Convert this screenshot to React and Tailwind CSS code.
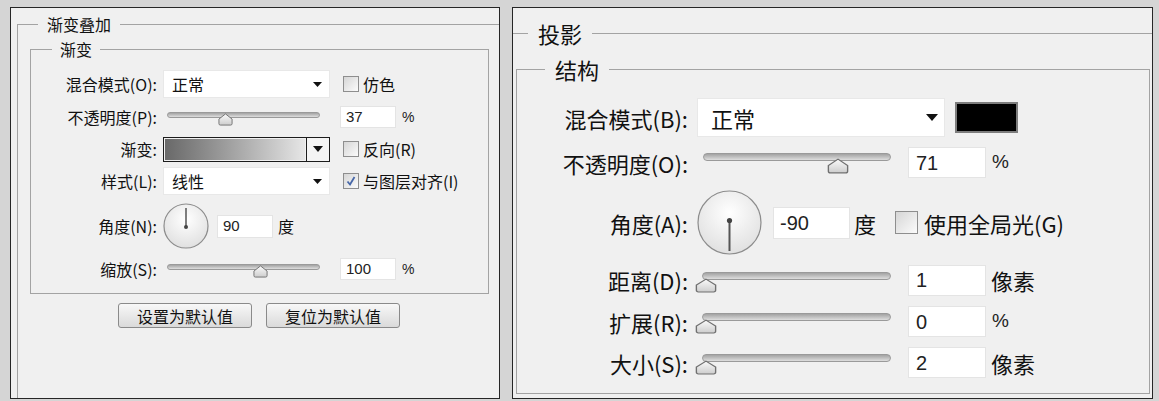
import React from "react";

function Tri({ className }) {
  return (
    <svg viewBox="0 0 10 6" className={className} preserveAspectRatio="none">
      <path d="M0 0H10L5 6Z" fill="#111" />
    </svg>
  );
}

function Thumb({ className, id }) {
  return (
    <svg viewBox="0 0 16 14" className={className} preserveAspectRatio="none">
      <defs>
        <linearGradient id={id} x1="0" y1="0" x2="0" y2="1">
          <stop offset="0" stopColor="#fbfbfb" />
          <stop offset="1" stopColor="#cdcdcd" />
        </linearGradient>
      </defs>
      <path
        d="M8 1 L15 6.5 V11.5 Q15 13 13.5 13 H2.5 Q1 13 1 11.5 V6.5 Z"
        fill={`url(#${id})`}
        stroke="#707070"
        strokeWidth="1"
      />
    </svg>
  );
}

function Slider({ box, track, thumb, id }) {
  return (
    <div className={`relative shrink-0 ${box}`}>
      <div
        className={`rounded-full border border-[#9a9a9a] bg-linear-to-b from-[#a3a3a3] to-[#dedede] ${track}`}
      />
      <Thumb className={`absolute ${thumb}`} id={id} />
    </div>
  );
}

function Box({ className, checked }) {
  return (
    <div
      className={`shrink-0 border border-[#8e8e8e] bg-linear-to-br from-[#d6d6d6] to-[#fbfbfb] flex items-center justify-center ${className}`}
    >
      {checked && (
        <svg viewBox="0 0 12 12" className="w-[12px] h-[12px]">
          <path d="M2.5 6.5 L5 9.5 L9.5 2" fill="none" stroke="#4767a8" strokeWidth="1.8" />
        </svg>
      )}
    </div>
  );
}

function Dial({ size, down }) {
  const c = size / 2;
  const r = c - 1;
  const gid = down ? "dialR" : "dialL";
  return (
    <svg width={size} height={size} viewBox={`0 0 ${size} ${size}`} className="shrink-0">
      <defs>
        <radialGradient id={gid} cx="0.5" cy="0.35" r="0.65">
          <stop offset="0" stopColor="#ffffff" />
          <stop offset="1" stopColor="#e0e0e0" />
        </radialGradient>
      </defs>
      <circle cx={c} cy={c} r={r} fill={`url(#${gid})`} stroke="#8c8c8c" strokeWidth="1.2" />
      {down ? (
        <>
          <line x1={c} y1={c - 2} x2={c} y2={size - 4} stroke="#555" strokeWidth="2" />
          <circle cx={c} cy={c - 2} r="2.6" fill="#444" />
        </>
      ) : (
        <>
          <line x1={c} y1={c + 1} x2={c} y2={5} stroke="#555" strokeWidth="1.5" />
          <circle cx={c} cy={c + 1} r="2" fill="#444" />
        </>
      )}
    </svg>
  );
}

const LBL_L = "w-[126px] mr-[6px] shrink-0 text-right text-[16px] leading-none text-[#111]";
const LBL_R = "w-[171px] mr-[9px] shrink-0 text-right text-[22px] leading-none text-[#111]";
const INP_L =
  "shrink-0 bg-white border border-[#e4e4e4] flex items-center font-['Liberation_Sans',sans-serif] text-[15px] text-[#222]";
const INP_R =
  "shrink-0 bg-white border border-[#e4e4e4] flex items-center font-['Liberation_Sans',sans-serif] text-[20px] text-[#222]";

function LeftPanel() {
  return (
    <div className="w-[490px] h-[392px] shrink-0 border border-[#262626] bg-[#f0f0f0] flex flex-col pl-[6px] pt-[6px]">
      <fieldset className="flex-1 min-w-0 border-t border-l border-[#a3a3a3]">
        <legend className="ml-[20px] px-[9px] text-[16px] leading-[20px] text-[#111]">渐变叠加</legend>
        <fieldset className="ml-[12px] mr-[10px] mt-[5px] min-w-0 border border-[#a3a3a3]">
          <legend className="ml-[21px] px-[8px] text-[16px] leading-[20px] text-[#111]">渐变</legend>
          <div className="flex flex-col pb-[12px]">
            {/* 混合模式 */}
            <div className="flex items-center mt-[11px] h-[28px]">
              <span className={LBL_L}>混合模式(O):</span>
              <div className="w-[167px] h-[28px] shrink-0 bg-white border border-[#e8e8e8] flex items-center pl-[8px] pr-[7px]">
                <span className="flex-1 text-[16px] leading-none text-[#111]">正常</span>
                <Tri className="w-[9px] h-[5px]" />
              </div>
              <Box className="ml-[13px] w-[16px] h-[16px]" />
              <span className="ml-[4px] text-[16px] leading-none text-[#111]">仿色</span>
            </div>
            {/* 不透明度 */}
            <div className="flex items-center mt-[7px] h-[24px]">
              <span className={LBL_L}>不透明度(P):</span>
              <Slider
                box="w-[177px] h-[24px]"
                track="ml-[4px] mt-[7px] w-[153px] h-[6px]"
                thumb="top-[8px] left-[55px] w-[15px] h-[13px]"
                id="t1"
              />
              <div className={`${INP_L} w-[56px] h-[22px] pl-[5px]`}>37</div>
              <span className="ml-[6px] font-['Liberation_Sans',sans-serif] text-[14px] text-[#222]">%</span>
            </div>
            {/* 渐变 */}
            <div className="flex items-center mt-[7px] h-[26px]">
              <span className={LBL_L}>渐变:</span>
              <div className="w-[167px] h-[25px] shrink-0 border border-[#1c1c1c] flex">
                <div className="flex-1 m-[1px] bg-linear-to-r from-[#696969] to-[#e6e6e6]" />
                <div className="w-[23px] border-l border-[#1c1c1c] bg-[#f4f4f4] flex items-center justify-center">
                  <Tri className="w-[10px] h-[6px]" />
                </div>
              </div>
              <Box className="ml-[13px] w-[16px] h-[16px]" />
              <span className="ml-[4px] text-[16px] leading-none text-[#111]">反向(R)</span>
            </div>
            {/* 样式 */}
            <div className="flex items-center mt-[5px] h-[28px]">
              <span className={LBL_L}>样式(L):</span>
              <div className="w-[167px] h-[28px] shrink-0 bg-white border border-[#e8e8e8] flex items-center pl-[8px] pr-[7px]">
                <span className="flex-1 text-[16px] leading-none text-[#111]">线性</span>
                <Tri className="w-[9px] h-[5px]" />
              </div>
              <Box className="ml-[13px] w-[16px] h-[16px]" checked />
              <span className="ml-[4px] text-[16px] leading-none text-[#111]">与图层对齐(I)</span>
            </div>
            {/* 角度 */}
            <div className="flex items-center mt-[8px] h-[46px]">
              <span className={LBL_L}>角度(N):</span>
              <Dial size={46} />
              <div className={`${INP_L} ml-[8px] w-[56px] h-[23px] pl-[5px]`}>90</div>
              <span className="ml-[5px] text-[16px] leading-none text-[#111]">度</span>
            </div>
            {/* 缩放 */}
            <div className="flex items-center mt-[8px] h-[24px]">
              <span className={LBL_L}>缩放(S):</span>
              <Slider
                box="w-[177px] h-[24px]"
                track="ml-[4px] mt-[7px] w-[153px] h-[6px]"
                thumb="top-[8px] left-[90px] w-[15px] h-[13px]"
                id="t2"
              />
              <div className={`${INP_L} w-[56px] h-[22px] pl-[5px]`}>100</div>
              <span className="ml-[6px] font-['Liberation_Sans',sans-serif] text-[14px] text-[#222]">%</span>
            </div>
          </div>
        </fieldset>
        <div className="flex gap-[14px] ml-[100px] mt-[9px]">
          <div className="w-[134px] h-[25px] rounded-[3px] border border-[#8a8a8a] bg-linear-to-b from-[#f8f8f8] to-[#dadada] flex items-center justify-center text-[16px] leading-none text-[#111]">
            设置为默认值
          </div>
          <div className="w-[134px] h-[25px] rounded-[3px] border border-[#8a8a8a] bg-linear-to-b from-[#f8f8f8] to-[#dadada] flex items-center justify-center text-[16px] leading-none text-[#111]">
            复位为默认值
          </div>
        </div>
      </fieldset>
    </div>
  );
}

function RightPanel() {
  return (
    <div className="w-[641px] h-[392px] shrink-0 border border-[#262626] bg-[#f0f0f0] flex flex-col pt-[11px]">
      <fieldset className="flex-1 min-w-0 border-t border-[#a3a3a3]">
        <legend className="ml-[15px] px-[10px] text-[22px] leading-[28px] text-[#111]">投影</legend>
        <fieldset className="ml-[3px] mr-[2px] mt-[8px] min-w-0 border border-[#a3a3a3]">
          <legend className="ml-[28px] px-[10px] text-[22px] leading-[28px] text-[#111]">结构</legend>
          <div className="flex flex-col pb-[15px]">
            {/* 混合模式 */}
            <div className="flex items-center mt-[15px] h-[39px]">
              <span className={LBL_R}>混合模式(B):</span>
              <div className="w-[248px] h-[39px] shrink-0 bg-white border border-[#e8e8e8] flex items-center pl-[13px] pr-[6px]">
                <span className="flex-1 text-[22px] leading-none text-[#111]">正常</span>
                <Tri className="w-[12px] h-[7px]" />
              </div>
              <div className="ml-[10px] w-[63px] h-[31px] bg-black border-2 border-[#7d7d7d]" />
            </div>
            {/* 不透明度 */}
            <div className="flex items-center mt-[10px] h-[31px]">
              <span className={LBL_R}>不透明度(O):</span>
              <Slider
                box="w-[211px] h-[31px]"
                track="ml-[6px] mt-[6px] w-[188px] h-[8px]"
                thumb="top-[11px] left-[130px] w-[22px] h-[16px]"
                id="t3"
              />
              <div className={`${INP_R} w-[78px] h-[31px] pl-[7px]`}>71</div>
              <span className="ml-[6px] font-['Liberation_Sans',sans-serif] text-[19px] text-[#222]">%</span>
            </div>
            {/* 角度 */}
            <div className="flex items-center mt-[12px] h-[65px]">
              <span className={LBL_R}>角度(A):</span>
              <Dial size={65} down />
              <div className={`${INP_R} ml-[11px] w-[77px] h-[32px] pl-[6px]`}>-90</div>
              <span className="ml-[4px] text-[22px] leading-none text-[#111]">度</span>
              <Box className="ml-[19px] w-[23px] h-[23px]" />
              <span className="ml-[6px] text-[22px] leading-none text-[#111]">使用全局光(G)</span>
            </div>
            {/* 距离 */}
            <div className="flex items-center mt-[10px] h-[30px]">
              <span className={LBL_R}>距离(D):</span>
              <Slider
                box="w-[211px] h-[30px]"
                track="ml-[5px] mt-[7px] w-[189px] h-[8px]"
                thumb="top-[13px] left-[-2px] w-[22px] h-[15px]"
                id="t4"
              />
              <div className={`${INP_R} w-[78px] h-[31px] pl-[7px]`}>1</div>
              <span className="ml-[5px] text-[22px] leading-none text-[#111]">像素</span>
            </div>
            {/* 扩展 */}
            <div className="flex items-center mt-[11px] h-[31px]">
              <span className={LBL_R}>扩展(R):</span>
              <Slider
                box="w-[211px] h-[31px]"
                track="ml-[5px] mt-[7px] w-[189px] h-[8px]"
                thumb="top-[13px] left-[-2px] w-[22px] h-[15px]"
                id="t5"
              />
              <div className={`${INP_R} w-[78px] h-[31px] pl-[7px]`}>0</div>
              <span className="ml-[6px] font-['Liberation_Sans',sans-serif] text-[19px] text-[#222]">%</span>
            </div>
            {/* 大小 */}
            <div className="flex items-center mt-[10px] h-[31px]">
              <span className={LBL_R}>大小(S):</span>
              <Slider
                box="w-[211px] h-[31px]"
                track="ml-[5px] mt-[7px] w-[189px] h-[8px]"
                thumb="top-[13px] left-[-2px] w-[22px] h-[15px]"
                id="t6"
              />
              <div className={`${INP_R} w-[78px] h-[31px] pl-[7px]`}>2</div>
              <span className="ml-[5px] text-[22px] leading-none text-[#111]">像素</span>
            </div>
          </div>
        </fieldset>
      </fieldset>
    </div>
  );
}

export default function App() {
  return (
    <div className="w-[1159px] h-[401px] overflow-hidden bg-[#d5d5d5] flex pt-[7px] pl-[10px] gap-[12px] font-['Noto_Sans_CJK_SC','Noto_Sans',sans-serif]">
      <LeftPanel />
      <RightPanel />
    </div>
  );
}
